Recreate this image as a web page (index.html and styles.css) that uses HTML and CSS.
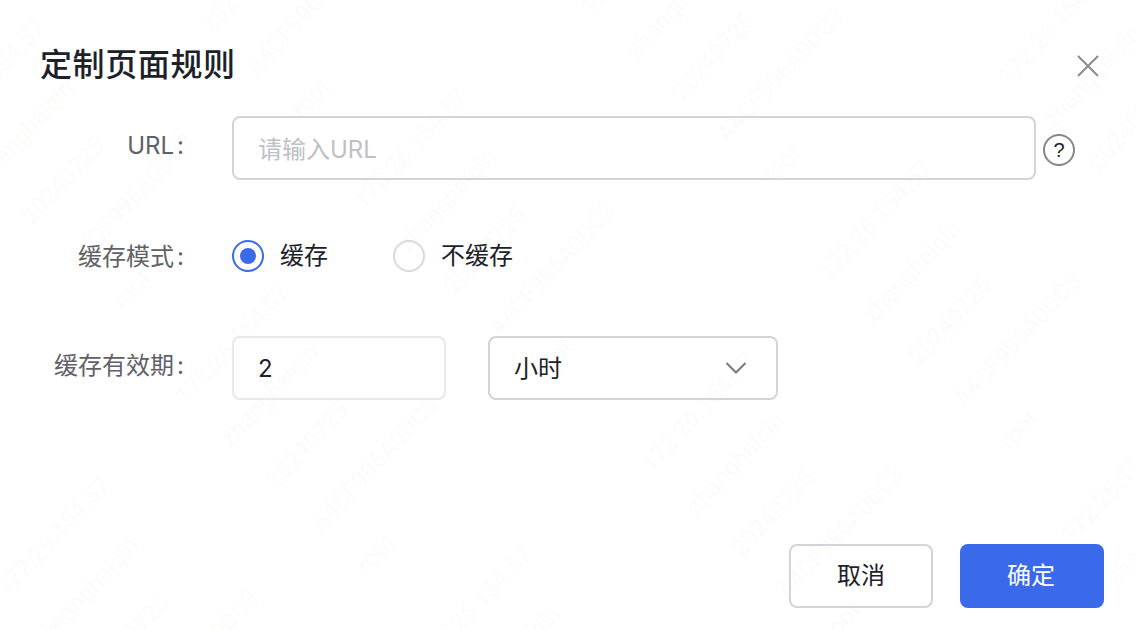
FILE: index.html
```html
<!DOCTYPE html>
<html>
<head>
  <meta charset="UTF-8">
  <link rel="stylesheet" href="styles.css">
</head>
<body>

  <!-- 水印 -->
  <div class="watermark">
    <div class="wm wm-1">172.26.154.57<br>zhanghaiqin<br>20240725<br>A4CF996A0DC3<br>root</div>
    <div class="wm wm-2">172.26.154.57<br>zhanghaiqin<br>20240725<br>A4CF996A0DC3<br>root</div>
    <div class="wm wm-3">172.26.154.57<br>zhanghaiqin<br>20240725<br>A4CF996A0DC3<br>root</div>
    <div class="wm wm-4">172.26.154.57<br>zhanghaiqin<br>20240725<br>A4CF996A0DC3<br>root</div>
    <div class="wm wm-5">172.26.154.57<br>zhanghaiqin<br>20240725<br>A4CF996A0DC3<br>root</div>
    <div class="wm wm-6">172.26.154.57<br>zhanghaiqin<br>20240725<br>A4CF996A0DC3<br>root</div>
    <div class="wm wm-7">172.26.154.57<br>zhanghaiqin<br>20240725<br>A4CF996A0DC3<br>root</div>
    <div class="wm wm-8">172.26.154.57<br>zhanghaiqin<br>20240725<br>A4CF996A0DC3<br>root</div>
    <div class="wm wm-9">172.26.154.57<br>zhanghaiqin<br>20240725<br>A4CF996A0DC3<br>root</div>
    <div class="wm wm-10">172.26.154.57<br>zhanghaiqin<br>20240725<br>A4CF996A0DC3<br>root</div>
    <div class="wm wm-11">172.26.154.57<br>zhanghaiqin<br>20240725<br>A4CF996A0DC3<br>root</div>
    <div class="wm wm-12">172.26.154.57<br>zhanghaiqin<br>20240725<br>A4CF996A0DC3<br>root</div>
  </div>

  <div class="dialog">
    <div class="dialog-header">
      <div class="dialog-title">定制页面规则</div>
      <button class="close-btn" type="button">
        <svg width="24" height="24" viewBox="0 0 24 24" fill="none" stroke="#8a8b91" stroke-width="2"><path d="M2 2 22 22M22 2 2 22"/></svg>
      </button>
    </div>

    <!-- URL -->
    <div class="form-row url-row">
      <label class="form-label" for="pageUrl">URL<span class="colon">:</span></label>
      <input type="text" id="pageUrl" class="text-input url-input" placeholder="请输入URL">
      <span class="help-icon">?</span>
    </div>

    <!-- 缓存模式 -->
    <div class="form-row radio-row">
      <div class="form-label">缓存模式<span class="colon">:</span></div>
      <div class="radio-item radio-first"><span class="radio checked"></span><span class="radio-text">缓存</span></div>
      <div class="radio-item"><span class="radio"></span><span class="radio-text">不缓存</span></div>
    </div>

    <!-- 缓存有效期 -->
    <div class="form-row ttl-row">
      <label class="form-label" for="cacheTtl">缓存有效期<span class="colon">:</span></label>
      <input type="text" id="cacheTtl" class="text-input ttl-input" value="2">
      <div class="select-box">
        <span class="select-value">小时</span>
        <svg width="22" height="14" viewBox="0 0 22 14" fill="none" stroke="#77787e" stroke-width="2"><path d="M1.5 2 11 11.5 20.5 2"/></svg>
      </div>
    </div>

    <div class="dialog-footer">
      <button class="btn btn-cancel" type="button">取消</button>
      <button class="btn btn-primary" type="button">确定</button>
    </div>
  </div>

</body>
</html>
```

FILE: styles.css
```css
* {
  box-sizing: border-box;
}

body {
  margin: 0;
  width: 1136px;
  height: 630px;
  overflow: hidden;
  position: relative;
  background: #fff;
  font-family: Inter, "Noto Sans CJK SC", sans-serif;
  font-size: 24px;
  color: #1d2129;
}

.watermark {
  position: absolute;
  top: 0;
  left: 0;
  width: 1136px;
  height: 630px;
  overflow: hidden;
}

.wm {
  position: absolute;
  transform: rotate(-47deg);
  transform-origin: 0 0;
  font-family: Roboto, sans-serif;
  font-size: 24px;
  line-height: 62px;
  white-space: nowrap;
  color: #fcfcfa;
}

.wm-1 { left: -87px; top: 115px; }
.wm-2 { left: 92px; top: -77px; }
.wm-3 { left: -22px; top: 572px; }
.wm-4 { left: 157px; top: 379px; }
.wm-5 { left: 335px; top: 184px; }
.wm-6 { left: 563px; top: -10px; }
.wm-7 { left: 400px; top: 641px; }
.wm-8 { left: 623px; top: 447px; }
.wm-9 { left: 800px; top: 255px; }
.wm-10 { left: 980px; top: 60px; }
.wm-11 { left: 1043px; top: 518px; }
.wm-12 { left: -309px; top: 310px; }

.dialog {
  position: relative;
  height: 630px;
  padding: 45px 32px 22px 40px;
  display: flex;
  flex-direction: column;
}

.dialog-header {
  display: flex;
  justify-content: space-between;
  align-items: center;
  height: 40px;
  margin-bottom: 31px;
}

.dialog-title {
  font-size: 32px;
  font-weight: 500;
  line-height: 40px;
  letter-spacing: 0.6px;
  color: #1d2129;
}

.close-btn {
  width: 24px;
  height: 24px;
  padding: 0;
  margin-right: 4px;
  margin-top: 2px;
  border: none;
  background: none;
  line-height: 0;
}

.form-row {
  display: flex;
  align-items: center;
}

.url-row {
  margin-bottom: 60px;
}

.radio-row {
  height: 32px;
  margin-bottom: 64px;
}

.form-label {
  width: 144px;
  margin-right: 48px;
  flex-shrink: 0;
  text-align: right;
  line-height: 32px;
  color: #5f6168;
}

.url-row .form-label {
  margin-bottom: 4px;
}

.radio-row .form-label {
  margin-top: 2px;
}

.ttl-row .form-label {
  margin-bottom: 4px;
}

.colon {
  margin-left: 3px;
}

.text-input {
  height: 64px;
  padding: 0 24px;
  border: 2px solid #d3d4da;
  border-radius: 8px;
  background: transparent;
  font: inherit;
  color: #1d2129;
  outline: none;
}

.text-input::placeholder {
  color: #bfc0c6;
}

.url-input {
  width: 804px;
  padding-top: 2px;
}

.ttl-input {
  width: 214px;
  margin-right: 42px;
  border-color: #e8e9ec;
}

.help-icon {
  width: 32px;
  height: 32px;
  margin-left: 7px;
  margin-top: 4px;
  border: 2px solid #85868c;
  border-radius: 50%;
  display: flex;
  align-items: center;
  justify-content: center;
  font-family: "Liberation Sans", sans-serif;
  font-size: 20px;
  color: #1d2129;
}

.radio-item {
  display: flex;
  align-items: center;
  gap: 16px;
  line-height: 32px;
}

.radio-first {
  margin-right: 65px;
}

.radio {
  width: 32px;
  height: 32px;
  border: 2px solid #d8d9dc;
  border-radius: 50%;
  display: flex;
  align-items: center;
  justify-content: center;
}

.radio.checked {
  border-color: #3a69e9;
}

.radio.checked::after {
  content: "";
  width: 16px;
  height: 16px;
  border-radius: 50%;
  background: #3a69e9;
}

.select-box {
  width: 290px;
  height: 64px;
  padding: 0 29px 0 24px;
  border: 2px solid #d3d4da;
  border-radius: 8px;
  display: flex;
  align-items: center;
  justify-content: space-between;
}

.select-value {
  margin-bottom: 4px;
}

.dialog-footer {
  margin-top: auto;
  display: flex;
  justify-content: flex-end;
  gap: 27px;
}

.btn {
  width: 144px;
  height: 64px;
  border-radius: 8px;
  font: inherit;
  padding: 0 0 5px;
}

.btn-cancel {
  border: 2px solid #d3d4da;
  background: transparent;
  color: #1d2129;
}

.btn-primary {
  border: none;
  padding-right: 2px;
  background: #3a69e9;
  color: #fff;
}
```
